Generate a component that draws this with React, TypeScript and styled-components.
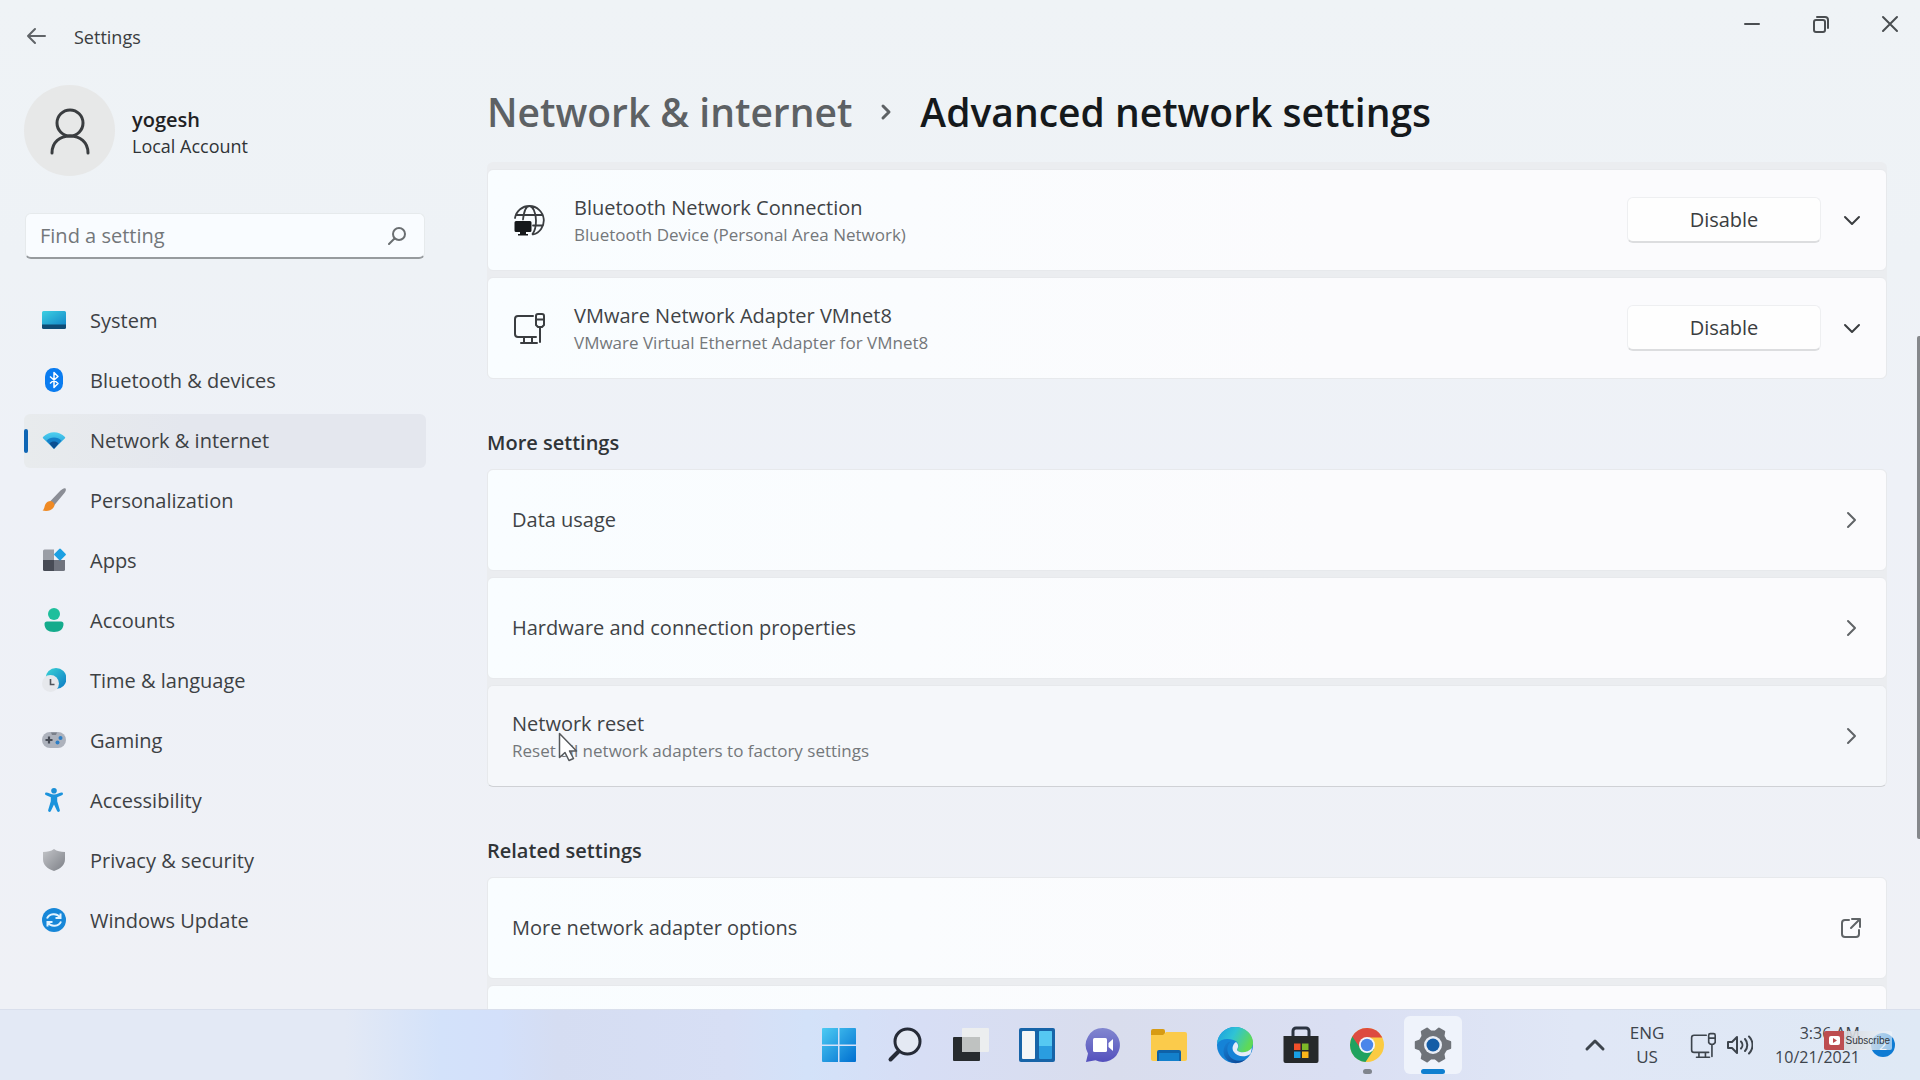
import React from "react";
import styled, { createGlobalStyle, css } from "styled-components";

const GlobalStyle = createGlobalStyle`
  * { box-sizing: border-box; }
  body {
    margin: 0;
    background: #eef1f6;
    color: #3a3d40;
    font-family: "Open Sans", "Noto Sans", sans-serif;
    font-size: 20px;
    line-height: 28px;
  }
  h1, h2, p { margin: 0; }
  a { color: inherit; text-decoration: none; }
  button, input { font: inherit; color: inherit; }
  button { background: none; border: 0; padding: 0; cursor: default; }
  svg { display: block; flex: none; }
`;

const Desktop = styled.div`
  height: 100vh;
  display: flex;
  flex-direction: column;
  overflow: hidden;
`;

const Window = styled.div`
  position: relative;
  flex: 1;
  min-height: 0;
  display: flex;
  flex-direction: column;
  background: linear-gradient(180deg, #eff3f6 0, #eef2f6 260px, #eef1f7 480px, #eff1f6 100%);
`;

const TitleBar = styled.header`
  height: 72px;
  flex: none;
  display: flex;
  align-items: center;
  padding-left: 24px;
`;

const BackButton = styled.button`
  width: 24px;
  height: 24px;
  display: grid;
  place-items: center;
  color: #606468;
`;

const WindowName = styled.span`
  flex: 1;
  padding: 2px 0 0 26px;
  font-size: 18px;
  line-height: 24px;
`;

const Captions = styled.div`
  align-self: flex-start;
  display: flex;
`;

const CaptionButton = styled.button`
  width: 69px;
  height: 48px;
  display: grid;
  place-items: center;
  color: #4a4e51;

  &:last-child { width: 65px; padding-left: 5px; }
`;

const Body = styled.div`
  flex: 1;
  min-height: 0;
  display: flex;
`;

const Sidebar = styled.aside`
  width: 426px;
  flex: none;
  padding: 13px 0 0 24px;
`;

const Profile = styled.a`
  display: flex;
  align-items: center;
  gap: 17px;
  height: 91px;
`;

const Avatar = styled.span`
  width: 91px;
  height: 91px;
  border-radius: 50%;
  background: #e7e8e8;
  display: grid;
  place-items: center;
`;

const ProfileText = styled.span`
  display: flex;
  flex-direction: column;
  font-size: 18px;
  line-height: 26px;
  color: #303336;
  padding-top: 5px;

  strong { font-size: 20px; font-weight: 600; color: #1f2224; }
`;

const SearchField = styled.label`
  display: flex;
  align-items: center;
  height: 46px;
  margin: 37px 1px 35px 1px;
  padding: 0 18px 0 14px;
  background: #f9fcff;
  border: 1px solid #e6eaec;
  border-bottom: 2px solid #979b9e;
  border-radius: 6px;
  color: #6a6e71;

  input {
    flex: 1;
    min-width: 0;
    border: 0;
    padding: 0;
    outline: 0;
    background: none;
  }
  input::placeholder { color: #73777a; opacity: 1; }
`;

const Nav = styled.nav`
  display: flex;
  flex-direction: column;
  gap: 6px;
`;

const NavItem = styled.a<{ $active?: boolean }>`
  height: 54px;
  display: flex;
  align-items: center;
  padding-left: ${(p) => (p.$active ? "0" : "18px")};
  border-radius: 6px;
  color: #3d4144;

  svg { margin: 0 24px 2px 0; }

  ${(p) =>
    p.$active &&
    css`
      background: linear-gradient(90deg, #e8ebed, #e4e7ee 40%);
      &::before {
        content: "";
        width: 4px;
        height: 24px;
        margin-right: 14px;
        border-radius: 2px;
        background: #0f66b5;
      }
    `}
`;

const Main = styled.main`
  flex: 1;
  min-width: 0;
  display: flex;
  flex-direction: column;
  padding: 0 33px 0 61px;
`;

const Breadcrumb = styled.h1`
  display: flex;
  align-items: center;
  height: 80px;
  flex: none;
  margin-bottom: 10px;
  font-size: 39px;
  line-height: 56px;
  font-weight: 600;
  color: #15191c;

  a { color: #5d6164; }
  svg { margin: 0 27px; color: #5d6164; }
`;

const Scroller = styled.div`
  flex: 1;
  min-height: 0;
  overflow: hidden;
  display: flex;
  flex-direction: column;
`;

const CardList = styled.div`
  flex: none;
  display: flex;
  flex-direction: column;
  gap: 6px;
  border-radius: 6px;
  background: #ebedf0;
`;

const PreviousEdge = styled.div`
  height: 1px;
`;

const cardBase = css<{ $hover?: boolean }>`
  height: 102px;
  display: flex;
  align-items: center;
  border: 1px solid #e7e9ec;
  border-radius: 6px;
  background: ${(p) => (p.$hover ? "#f5f7fa" : "linear-gradient(90deg, #f9fdff, #fbfbfd 60%)")};
  ${(p) => p.$hover && css`border-bottom-color: #cfd1d5;`}
`;

const AdapterCard = styled.section`
  ${cardBase}
  padding: 0 22px 0 25px;
`;

const LinkCard = styled.a<{ $hover?: boolean }>`
  ${cardBase}
  position: relative;
  padding: 0 23px 0 24px;
  color: #606467;
`;

const CardText = styled.span<{ $indent?: boolean }>`
  flex: 1;
  min-width: 0;
  display: flex;
  flex-direction: column;
  padding-left: ${(p) => (p.$indent ? "29px" : "0")};
`;

const CardTitle = styled.span`
  line-height: 28px;
  color: #3f4346;
`;

const CardNote = styled.span`
  font-size: 17px;
  line-height: 25px;
  color: #74777a;
`;

const DisableButton = styled.button`
  width: 194px;
  height: 46px;
  border: 1px solid #eeeff1;
  border-bottom: 2px solid #dcdddf;
  border-radius: 6px;
  background: #fefefe;
  margin-right: 19px;
`;

const IconButton = styled.button`
  display: grid;
  place-items: center;
  width: 24px;
  height: 24px;
`;

const SectionTitle = styled.h2`
  flex: none;
  height: 90px;
  padding-top: 50px;
  font-size: 20px;
  line-height: 28px;
  font-weight: 600;
  color: #303437;
`;

const Cursor = styled.svg`
  position: absolute;
  left: 70px;
  top: 46px;
`;

const ScrollThumb = styled.div`
  position: absolute;
  right: 0;
  top: 336px;
  width: 3px;
  height: 503px;
  border-radius: 2px 0 0 2px;
  background: #85888b;
`;

const Taskbar = styled.footer`
  position: relative;
  height: 71px;
  flex: none;
  display: flex;
  align-items: center;
  justify-content: flex-end;
  border-top: 1px solid #d9dfec;
  background: linear-gradient(90deg, #e3e9f5 0, #e3e9f5 18%, #d3e2fa 23%, #d3e0fa 26%, #d5ddf2 29%, #d7dff5 38%, #d3e2f9 42%, #d7def5 48%, #d9dded 58%, #dadff3 70%, #e0e7f6 82%, #dfe9f5 100%);
`;

const Apps = styled.div`
  display: flex;
  gap: 8px;
  margin-right: 121px;
`;

const AppButton = styled.button<{ $active?: boolean }>`
  width: 58px;
  height: 58px;
  display: grid;
  place-items: center;
  border-radius: 6px;
  position: relative;
  background: ${(p) => (p.$active ? "#eff3fb" : "transparent")};
`;

const RunMark = styled.span<{ $wide?: boolean }>`
  position: absolute;
  bottom: 0;
  width: ${(p) => (p.$wide ? "24px" : "9px")};
  height: 5px;
  border-radius: 3px;
  background: ${(p) => (p.$wide ? "#0f7fd0" : "#80858e")};
`;

const Tray = styled.div`
  display: flex;
  align-items: center;
  font-size: 17px;
  line-height: 24px;
  color: #3d444c;
  padding-right: 25px;
`;

const Language = styled.button`
  width: 46px;
  margin: 0 20px 0 17px;
`;

const Clock = styled.button`
  width: 100px;
  margin-left: 7px;
  font-size: 16px;
  text-align: right;
  white-space: nowrap;
`;

const Status = styled.button`
  display: flex;
  align-items: center;
  gap: 11px;
`;

const Badge = styled.span`
  width: 24px;
  height: 24px;
  margin-left: 11px;
  border-radius: 50%;
  background: #0f7bd3;
  color: #fff;
  font-size: 14px;
  text-align: center;
`;

const Subscribe = styled.button`
  position: absolute;
  right: 28px;
  top: 21px;
  display: flex;
  height: 19px;
  border-radius: 2px;
  overflow: hidden;
  background: linear-gradient(90deg, rgba(205, 205, 208, 0.95), rgba(225, 230, 236, 0.85) 65%, rgba(240, 246, 252, 0.6));
  font-family: "Liberation Sans", Arial, sans-serif;
  font-size: 10px;
  line-height: 19px;
  color: #33373b;

  span { padding: 0 2px; }
`;

type IconProps = { children: React.ReactNode; w?: number; h?: number; box?: string; sw?: number };

const Line = ({ children, w = 24, h = w, box, sw = 2 }: IconProps) => (
  <svg width={w} height={h} viewBox={box ?? `0 0 ${w} ${h}`} fill="none" stroke="currentColor" strokeWidth={sw} strokeLinecap="round" strokeLinejoin="round" aria-hidden="true">
    {children}
  </svg>
);

const Art = ({ children, w = 24, h = w, box }: IconProps) => (
  <svg width={w} height={h} viewBox={box ?? `0 0 ${w} ${h}`} aria-hidden="true">
    {children}
  </svg>
);

const ChevronRight = () => <Line w={24} sw={2}><path d="M9 5l7 7-7 7" /></Line>;
const ChevronDown = () => <Line w={24} sw={2}><path d="M5 9l7 7 7-7" /></Line>;

const EthernetIcon = ({ w = 32 }: { w?: number }) => (
  <Line w={w} box="0 0 32 32" sw={2}>
    <path d="M20 4H5a3 3 0 0 0-3 3v15a3 3 0 0 0 3 3h18M11 25v5M19 25v5M8 31h16" />
    <path d="M23 4a2 2 0 0 1 2-2h4a2 2 0 0 1 2 2v9l-2 2h-4l-2-2zM23 7.500h8M27 15v15" />
  </Line>
);

const GlobeIcon = () => (
  <Line w={32} sw={1.800}>
    <path d="M2 14A14.500 14.500 0 1 1 20 30.500M3 11h26M20 21.500h10M10 15.500C11 7 13.500 2 16.500 2s6.500 6 6.500 14.500c0 6-1.500 11-3.500 13.500" />
    <path d="M3 17h14a1.500 1.500 0 0 1 1.500 1.500v8A1.500 1.500 0 0 1 17 28H3a1.500 1.500 0 0 1-1.500-1.500v-8A1.500 1.500 0 0 1 3 17z" fill="#16191b" stroke="none" />
    <path d="M7 28h6v2h2v1.500H5V30h2z" fill="#16191b" stroke="none" />
  </Line>
);

const navItems: { name: string; icon: React.ReactNode }[] = [
  {
    name: "System",
    icon: (
      <Art>
        <defs><linearGradient id="sys" x2="1" y2="1"><stop stopColor="#3dd0e2" /><stop offset="1" stopColor="#1488c8" /></linearGradient></defs>
        <path d="M0 4.500A1.500 1.500 0 0 1 1.500 3h21A1.500 1.500 0 0 1 24 4.500V17H0z" fill="url(#sys)" />
        <path d="M0 16.500h24v3a1.500 1.500 0 0 1-1.500 1.500h-21A1.500 1.500 0 0 1 0 19.500z" fill="#0f4c75" />
      </Art>
    ),
  },
  {
    name: "Bluetooth & devices",
    icon: (
      <Art>
        <rect x="3" width="18" height="24" rx="8.500" fill="#0a7cf0" />
        <path d="M8 8.500l8 7-4 4v-15l4 4-8 7" fill="none" stroke="#fff" strokeWidth="1.500" strokeLinejoin="round" />
      </Art>
    ),
  },
  {
    name: "Network & internet",
    icon: (
      <Art>
        <defs><linearGradient id="net" x2="0" y2="1"><stop stopColor="#4fd0ef" /><stop offset="1" stopColor="#1b93d6" /></linearGradient></defs>
        <path d="M1 9C7 2.500 17 2.500 23 9a1 1 0 0 1 0 1.200L12.800 20a1 1 0 0 1-1.600 0L1 10.200A1 1 0 0 1 1 9z" fill="url(#net)" />
        <path d="M4.500 12.700c4-4.200 11-4.200 15 0L12.800 20a1 1 0 0 1-1.600 0z" fill="#1580c8" />
        <path d="M7.500 15.500c2.500-2.600 6.500-2.600 9 0L12.800 20a1 1 0 0 1-1.600 0z" fill="#0b4f91" />
      </Art>
    ),
  },
  {
    name: "Personalization",
    icon: (
      <Art>
        <path d="M23.500.6c-1-1-3 0-5 2L8 13.500l4 4L22 5.500c1.700-2 2.400-4 1.500-4.900z" fill="#8b8e96" />
        <path d="M8.500 13c2.500.5 4 2 4 4.500C11 22 6 24 .5 22.500c2.500-2 1.500-4 3-6.500 1.200-2 3-3 5-3z" fill="#ef8a24" />
      </Art>
    ),
  },
  {
    name: "Apps",
    icon: (
      <Art>
        <path d="M2.500 1.500H12V12H1V3a1.500 1.500 0 0 1 1.500-1.500z" fill="#9a9ea6" />
        <path d="M1 12h11v11H2.500A1.500 1.500 0 0 1 1 21.500z" fill="#474b55" />
        <path d="M12 12h11v9.500a1.500 1.500 0 0 1-1.500 1.500H12z" fill="#70747e" />
        <rect x="13.500" y="2" width="9" height="9" rx="1.200" transform="rotate(45 18 6.500)" fill="#1ba0e2" />
      </Art>
    ),
  },
  {
    name: "Accounts",
    icon: (
      <Art>
        <circle cx="12" cy="6" r="6" fill="#1fbf9c" />
        <path d="M5 13.500h14a2.500 2.500 0 0 1 2.500 2.500c0 5-3.500 8-9.500 8s-9.500-3-9.500-8A2.500 2.500 0 0 1 5 13.500z" fill="#14ab8c" />
      </Art>
    ),
  },
  {
    name: "Time & language",
    icon: (
      <Art>
        <defs><linearGradient id="time" x2="1" y2="1"><stop stopColor="#3bd5d6" /><stop offset="1" stopColor="#0b78c4" /></linearGradient></defs>
        <circle cx="14" cy="10.500" r="10.500" fill="url(#time)" />
        <circle cx="8.500" cy="15.500" r="8.500" fill="#e6e8ec" />
        <path d="M8.500 11v5.500h4" fill="none" stroke="#50555c" strokeWidth="1.600" />
      </Art>
    ),
  },
  {
    name: "Gaming",
    icon: (
      <Art>
        <rect y="4" width="24" height="16" rx="8" fill="#adb2bc" />
        <path d="M7 8.500v7M3.500 12h7" stroke="#454a54" strokeWidth="2.200" />
        <path d="M9 4.500h6l-1 2.500h-4z" fill="#7b808a" />
        <circle cx="15.500" cy="14.500" r="2" fill="#2d7ec6" />
        <circle cx="18.500" cy="10" r="2" fill="#2d7ec6" />
      </Art>
    ),
  },
  {
    name: "Accessibility",
    icon: (
      <Art>
        <circle cx="12" cy="2.800" r="2.800" fill="#1b8fd6" />
        <path d="M3.800 4.500c-1.300.8-.8 2.400.4 2.800l4.600 1.900v4L6.200 22c-.5 1.900 1.900 2.700 2.700 1L12 16.500l3.100 6.500c.8 1.700 3.200.9 2.700-1l-2.600-8.800v-4l4.600-1.900c1.200-.4 1.700-2 .4-2.800C18 4.200 15 6.500 12 6.500S6 4.200 3.800 4.500z" fill="#1b93dc" />
      </Art>
    ),
  },
  {
    name: "Privacy & security",
    icon: (
      <Art>
        <defs><linearGradient id="sec" x2="1" y2="1"><stop stopColor="#c3c5c9" /><stop offset="1" stopColor="#7d8087" /></linearGradient></defs>
        <path d="M12 1c3 2.200 6.500 3 11 3v7c0 6-4 9.500-11 12C5 20.500 1 17 1 11V4c4.500 0 8-.8 11-3z" fill="url(#sec)" />
      </Art>
    ),
  },
  {
    name: "Windows Update",
    icon: (
      <Art>
        <circle cx="12" cy="12" r="12" fill="#1787d8" />
        <path d="M5 10.500C7 5.500 15 4.500 18 9.500M18.500 5.500v4.500h-5M19 13.500c-2 5-10 6-13 1M5.500 18.500V14h5" fill="none" stroke="#e3f4ff" strokeWidth="2" />
      </Art>
    ),
  },
];

const taskApps: { name: string; icon: React.ReactNode; mark?: boolean; active?: boolean }[] = [
  {
    name: "Start",
    icon: (
      <Art w={36}>
        <defs><linearGradient id="win" x2="1" y2="1"><stop stopColor="#4ccbf3" /><stop offset="1" stopColor="#006fd0" /></linearGradient></defs>
        <path d="M1 2a1 1 0 0 1 1-1h15v16.500H1zM18.500 1H34a1 1 0 0 1 1 1v15.500H18.500zM1 19h16v16H2a1 1 0 0 1-1-1zM18.500 19H35v15a1 1 0 0 1-1 1H18.500z" fill="url(#win)" />
      </Art>
    ),
  },
  {
    name: "Search",
    icon: (
      <Art w={36}>
        <circle cx="20.500" cy="14.500" r="12.500" fill="#e4e9f3" stroke="#262b37" strokeWidth="3" />
        <path d="M11.500 24.500l-8 8" stroke="#262b37" strokeWidth="4" strokeLinecap="round" />
      </Art>
    ),
  },
  {
    name: "Task view",
    icon: (
      <Art w={36}>
        <rect x="0" y="10" width="27" height="24" rx="1" fill="#272b2e" />
        <rect x="9" y="1" width="27" height="24" rx="1" fill="#eeefee" opacity="0.9" />
        <path d="M9 10h18v15H9z" fill="#bfc2c1" />
      </Art>
    ),
  },
  {
    name: "Widgets",
    icon: (
      <Art w={36}>
        <rect y="1" width="36" height="34" rx="2" fill="#1764a8" />
        <rect x="3" y="4" width="13" height="28" rx="1" fill="#f4f6f7" />
        <rect x="20" y="4" width="13" height="28" rx="1" fill="#2a9de0" />
        <path d="M20 5a1 1 0 0 1 1-1h11a1 1 0 0 1 1 1v14H20z" fill="#55c8f2" />
      </Art>
    ),
  },
  {
    name: "Chat",
    icon: (
      <Art w={36}>
        <defs><linearGradient id="chat" x2="0" y2="1"><stop stopColor="#8287d0" /><stop offset="1" stopColor="#5450bd" /></linearGradient></defs>
        <path d="M18 1a17 17 0 1 1-7.500 32.300L1 35l2-8.500A17 17 0 0 1 18 1z" fill="url(#chat)" />
        <rect x="8" y="11" width="14" height="14" rx="1.500" fill="#fff" />
        <path d="M23.500 16l4.500-4v12l-4.500-4z" fill="#fff" />
      </Art>
    ),
  },
  {
    name: "File Explorer",
    icon: (
      <Art w={38} h={36}>
        <path d="M1 4a2 2 0 0 1 2-2h10a2 2 0 0 1 2 2v6H1z" fill="#d79b14" />
        <path d="M1 8h12l3-3h19a2 2 0 0 1 2 2v25a2 2 0 0 1-2 2H3a2 2 0 0 1-2-2z" fill="#fbcb4b" />
        <path d="M7 34V25a2 2 0 0 1 2-2h20a2 2 0 0 1 2 2v9z" fill="#0f62a8" />
        <path d="M9 26h20v8H9z" fill="#1380cc" />
      </Art>
    ),
  },
  {
    name: "Microsoft Edge",
    icon: (
      <Art w={38}>
        <defs>
          <linearGradient id="edgeTop" x2="1" y2=".4"><stop stopColor="#1b9be0" /><stop offset=".5" stopColor="#2fc3d5" /><stop offset="1" stopColor="#5fd957" /></linearGradient>
          <linearGradient id="edgeLow" x2="1" y2="1"><stop stopColor="#1683d8" /><stop offset="1" stopColor="#0d3f8c" /></linearGradient>
        </defs>
        <circle cx="19" cy="19" r="18" fill="#1583d7" />
        <path d="M1 18C1.500 8 9.500 1 19 1c10.500 0 18 7.500 18 15.500 0 6.500-4.500 10-9.500 10-4.500 0-7-2-6-3.500 2-3 1-7.500-4-9C11 12 4 13 1 18z" fill="url(#edgeTop)" />
        <path d="M15 15.500c-4 3-5 9-1.500 14.500 3 4.500 10 6 16 3.500C26 36.500 21 38 16 36.600 8 34 6 26 8.500 20.500c1.300-3 3.500-4.700 6.500-5z" fill="url(#edgeLow)" />
        <path d="M20 16c-3 2-4.500 6-2.500 9.500 3 5 11 6.500 17 2.500l1.500-6C33 25.500 28 27 24 26c-3-1-3.500-2-2.500-3.500 1.500-2.500.5-5-1.500-6.500z" fill="#e6edf8" />
      </Art>
    ),
  },
  {
    name: "Microsoft Store",
    icon: (
      <Art w={38}>
        <path d="M11 12V5a3 3 0 0 1 3-3h10a3 3 0 0 1 3 3v7" fill="none" stroke="#2b3340" strokeWidth="3" />
        <path d="M1.500 10h35v25a2 2 0 0 1-2 2h-31a2 2 0 0 1-2-2z" fill="#26292b" />
        <path d="M12 17.500h6.500V24H12z" fill="#f2502a" />
        <path d="M20 17.500h6.500V24H20z" fill="#7db928" />
        <path d="M12 25.500h6.500V32H12z" fill="#18a1e6" />
        <path d="M20 25.500h6.500V32H20z" fill="#fab51a" />
      </Art>
    ),
  },
  {
    name: "Google Chrome",
    mark: true,
    icon: (
      <Art w={36}>
        <circle cx="18" cy="18" r="17" fill="#fbcb42" />
        <path d="M18 18L3.300 9.500A17 17 0 0 0 16.500 35l8.500-13z" fill="#1fa260" />
        <path d="M18 10.500h15.300A17 17 0 0 0 3.300 9.500l7.500 11z" fill="#dd4b40" />
        <circle cx="18" cy="18" r="8" fill="#f4f6fb" />
        <circle cx="18" cy="18" r="6.200" fill="#4a86ea" />
      </Art>
    ),
  },
  {
    name: "Settings",
    mark: true,
    active: true,
    icon: (
      <Art w={38}>
        <g fill="#6f7379">
          <circle cx="19" cy="19" r="14.500" />
          {[30, 90, 150, 210, 270, 330].map((a) => (
            <path key={a} d="M13 7l2-5.500a1 1 0 0 1 1-.7h6a1 1 0 0 1 1 .7L25 7z" transform={`rotate(${a} 19 19)`} />
          ))}
        </g>
        <circle cx="19" cy="19" r="9" fill="#e9eef6" />
        <circle cx="19" cy="19" r="6.500" fill="#145da6" />
      </Art>
    ),
  },
];

const adapters = [
  { name: "Bluetooth Network Connection", note: "Bluetooth Device (Personal Area Network)", icon: <GlobeIcon /> },
  { name: "VMware Network Adapter VMnet8", note: "VMware Virtual Ethernet Adapter for VMnet8", icon: <EthernetIcon /> },
];

export default function App() {
  return (
    <>
      <GlobalStyle />
      <Desktop>
        <Window>
          <TitleBar>
            <BackButton aria-label="Back">
              <Line w={20} sw={2}><path d="M19 10H2M9 3l-7 7 7 7" /></Line>
            </BackButton>
            <WindowName>Settings</WindowName>
            <Captions>
              <CaptionButton aria-label="Minimize"><Line w={16} sw={2}><path d="M1 8h14" /></Line></CaptionButton>
              <CaptionButton aria-label="Restore">
                <Line w={18} sw={2}><rect x="2" y="5" width="11" height="12" rx="2" /><path d="M5 2h8a3 3 0 0 1 3 3v8" /></Line>
              </CaptionButton>
              <CaptionButton aria-label="Close"><Line w={18} sw={2}><path d="M2 2l14 14M16 2L2 16" /></Line></CaptionButton>
            </Captions>
          </TitleBar>
          <Body>
            <Sidebar>
              <Profile href="#account">
                <Avatar>
                  <Line w={44} h={50} sw={3}><circle cx="22" cy="17" r="13" /><path d="M4 47c0-11 8-17 18-17s18 6 18 17" /></Line>
                </Avatar>
                <ProfileText><strong>yogesh</strong>Local Account</ProfileText>
              </Profile>
              <SearchField>
                <input type="text" placeholder="Find a setting" aria-label="Find a setting" />
                <Line w={18} sw={2}><circle cx="11" cy="7" r="6" /><path d="M6.500 11.500L1 17" /></Line>
              </SearchField>
              <Nav aria-label="Settings">
                {navItems.map((item) => (
                  <NavItem key={item.name} href="#nav" $active={item.name === "Network & internet"}>
                    {item.icon}
                    <span>{item.name}</span>
                  </NavItem>
                ))}
              </Nav>
            </Sidebar>
            <Main>
              <Breadcrumb>
                <a href="#network">Network &amp; internet</a>
                <Line w={14} h={18} sw={3}><path d="M4 3l6 6-6 6" /></Line>
                Advanced network settings
              </Breadcrumb>
              <Scroller>
                <CardList>
                  <PreviousEdge />
                  {adapters.map((a) => (
                    <AdapterCard key={a.name}>
                      {a.icon}
                      <CardText $indent>
                        <CardTitle>{a.name}</CardTitle>
                        <CardNote>{a.note}</CardNote>
                      </CardText>
                      <DisableButton>Disable</DisableButton>
                      <IconButton aria-label={`Expand ${a.name}`}><ChevronDown /></IconButton>
                    </AdapterCard>
                  ))}
                </CardList>
                <SectionTitle>More settings</SectionTitle>
                <CardList>
                  <LinkCard href="#usage">
                    <CardText><CardTitle>Data usage</CardTitle></CardText>
                    <ChevronRight />
                  </LinkCard>
                  <LinkCard href="#hardware">
                    <CardText><CardTitle>Hardware and connection properties</CardTitle></CardText>
                    <ChevronRight />
                  </LinkCard>
                  <LinkCard href="#reset" $hover>
                    <CardText>
                      <CardTitle>Network reset</CardTitle>
                      <CardNote>Reset all network adapters to factory settings</CardNote>
                    </CardText>
                    <ChevronRight />
                    <Cursor width="20" height="30" viewBox="0 0 20 30" aria-hidden="true">
                      <path d="M1.500 1.500v24l5.500-5 4 8 4.500-2-4-7.500h7z" fill="#fff" stroke="#55585b" strokeWidth="1.500" strokeLinejoin="round" />
                    </Cursor>
                  </LinkCard>
                </CardList>
                <SectionTitle>Related settings</SectionTitle>
                <CardList>
                  <LinkCard href="#adapters">
                    <CardText><CardTitle>More network adapter options</CardTitle></CardText>
                    <Line w={24} sw={2}><path d="M10 4H6a3 3 0 0 0-3 3v11a3 3 0 0 0 3 3h11a3 3 0 0 0 3-3v-4M13 3h8v8M21 3l-9 9" /></Line>
                  </LinkCard>
                  <LinkCard href="#firewall" aria-label="Next related setting" />
                </CardList>
              </Scroller>
            </Main>
          </Body>
          <ScrollThumb />
        </Window>
        <Taskbar>
          <Apps>
            {taskApps.map((app) => (
              <AppButton key={app.name} aria-label={app.name} $active={app.active}>
                {app.icon}
                {app.mark && <RunMark $wide={app.active} />}
              </AppButton>
            ))}
          </Apps>
          <Tray>
            <button aria-label="Show hidden icons"><Line w={24} sw={3}><path d="M4 16l8-8 8 8" /></Line></button>
            <Language>ENG<br />US</Language>
            <Status aria-label="Network and sound">
              <EthernetIcon w={26} />
              <Line w={26} h={20} sw={2}>
                <path d="M1 7v6h4l5 5V2L5 7zM14 6.500a5 5 0 0 1 0 7M18 4a9 9 0 0 1 0 12M22 1.500a12 12 0 0 1 0 17" />
              </Line>
            </Status>
            <Clock>3:36 AM<br />10/21/2021</Clock>
            <Badge>2</Badge>
          </Tray>
          <Subscribe>
            <Line w={20} h={19} sw={1}>
              <path d="M0 0h20v19H0z" fill="#bd4d50" stroke="none" />
              <rect x="5" y="5" width="11" height="9" rx="2" fill="#fff" stroke="none" />
              <path d="M9 7l4 2.500-4 2.500z" fill="#bd4d50" stroke="none" />
            </Line>
            <span>Subscribe</span>
          </Subscribe>
        </Taskbar>
      </Desktop>
    </>
  );
}
